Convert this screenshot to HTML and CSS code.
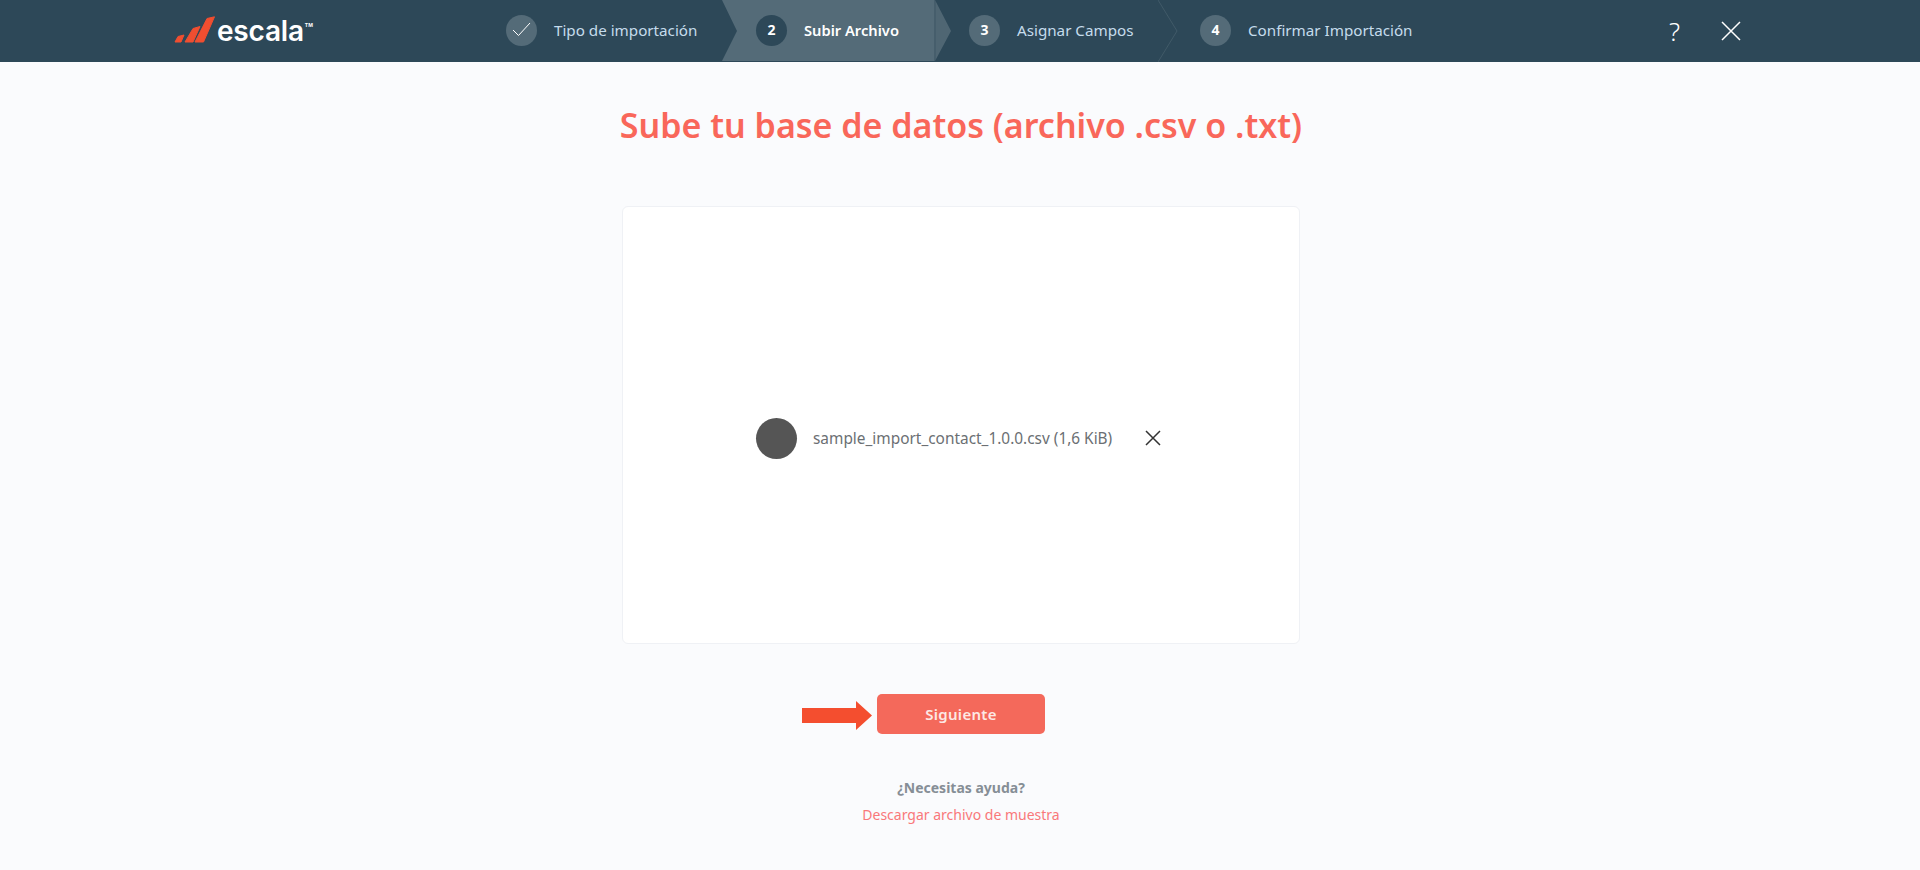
FILE: index.html
```html
<!DOCTYPE html>
<html lang="es">
<head>
<meta charset="utf-8">
<title>Importar contactos</title>
<link rel="stylesheet" href="styles.css">
</head>
<body>

<header class="topbar">
  <a class="logo" href="#">
    <svg class="logo-bars" width="41" height="27" viewBox="0 0 41 27">
      <path d="M1 26 L4 20.5 L10 19 L7 26 Z" fill="#f04e30" stroke="#f04e30" stroke-linejoin="round"/>
      <path d="M11 26 L19 12.5 L26 10.5 L19 26 Z" fill="#f04e30" stroke="#f04e30" stroke-linejoin="round"/>
      <path d="M21 26 L33 2.5 L40.5 0.8 L29.5 26 Z" fill="#f04e30" stroke="#f04e30" stroke-linejoin="round"/>
    </svg>
    <span class="logo-name">escala</span><span class="logo-tm">TM</span>
  </a>

  <ol class="steps">
    <li class="step step-done">
      <span class="step-num">
        <svg width="19" height="15" viewBox="0 0 19 15"><path d="M1 8 L6.5 13.5 L18 1" fill="none" stroke="#fff" stroke-width="1"/></svg>
      </span>
      Tipo de importación
    </li>
    <li class="step step-active">
      <span class="step-num">2</span>
      Subir Archivo
    </li>
    <li class="step step-next">
      <span class="step-num">3</span>
      Asignar Campos
      <svg class="step-chevron" width="20" height="62" viewBox="0 0 20 62"><path d="M0 0 L19 31 L0 62" fill="none" stroke="#415a68" stroke-width="1"/></svg>
    </li>
    <li class="step step-last">
      <span class="step-num">4</span>
      Confirmar Importación
    </li>
  </ol>

  <div class="topbar-actions">
    <a class="help" href="#">?</a>
    <a class="close" href="#">
      <svg width="20" height="20" viewBox="0 0 20 20"><path d="M1 1 L19 19 M19 1 L1 19" stroke="#fff" stroke-width="1.5"/></svg>
    </a>
  </div>
</header>

<main class="content">
  <h1 class="title">Sube tu base de datos (archivo .csv o .txt)</h1>

  <section class="dropzone">
    <div class="file">
      <span class="file-icon"></span>
      <span class="file-name">sample_import_contact_1.0.0.csv (1,6 KiB)</span>
      <a class="file-remove" href="#">
        <svg width="16" height="16" viewBox="0 0 16 16"><path d="M1 1 L15 15 M15 1 L1 15" stroke="#333" stroke-width="1.5"/></svg>
      </a>
    </div>
  </section>

  <div class="next-wrap">
    <svg class="next-arrow" width="70" height="29" viewBox="0 0 70 29"><path d="M0 7 H54 V0 L70 14.5 L54 29 V22 H0 Z" fill="#f44e2f"/></svg>
    <button class="next" type="button">Siguiente</button>
  </div>

  <p class="help-title">¿Necesitas ayuda?</p>
  <a class="sample" href="#">Descargar archivo de muestra</a>
</main>

</body>
</html>
```

FILE: styles.css
```css
* {
    box-sizing: border-box;
}

html, body {
    margin: 0;
    height: 100%;
}

body {
    background-color: #fafbfd;
    font-family: "Noto Sans", "Open Sans", sans-serif;
    color: #555;
}

a {
    text-decoration: none;
}

/* top bar */
.topbar {
    display: flex;
    align-items: center;
    height: 62px;
    padding-left: 174px;
    background-color: #2d4858;
    overflow: hidden;
}

.logo {
    display: flex;
    align-items: flex-start;
    width: 332px;
    color: #fff;
}

.logo-bars {
    margin-top: 1px;
    flex: none;
}

.logo-name {
    margin-left: 2px;
    font-family: Inter, sans-serif;
    font-size: 28px;
    font-weight: 600;
    line-height: 32px;
    letter-spacing: -0.2px;
}

.logo-tm {
    margin-left: 1px;
    font-family: Inter, sans-serif;
    font-size: 5px;
    font-weight: 700;
    line-height: 20px;
}

.steps {
    display: flex;
    flex: none;
    width: 1163px;
    margin: 0;
    padding: 0;
    list-style: none;
}

.step {
    position: relative;
    display: flex;
    align-items: center;
    gap: 17px;
    height: 62px;
    padding-bottom: 3px;
    font-size: 15.2px;
    color: #c5dcec;
    white-space: nowrap;
}

.step-num {
    display: flex;
    align-items: center;
    justify-content: center;
    flex: none;
    width: 31px;
    height: 31px;
    margin-top: 2px;
    padding-bottom: 2px;
    border-radius: 50%;
    background-color: #546b78;
    color: #fff;
    font-size: 14px;
    font-weight: 700;
}

.step-done {
    width: 216px;
}

.step-active {
    width: 229px;
    padding-left: 34px;
    background: linear-gradient(to right, #546b78 212px, #465e6c 212px, #465e6c 214px, #4f6673 214px);
    clip-path: polygon(0 0, 213px 0, 100% 50%, 213px 61px, 0 61px, 15px 50%);
    color: #fff;
    font-size: 14.7px;
    font-weight: 600;
}

.step-active .step-num {
    background-color: #2d4858;
}

.step-next {
    width: 243px;
    margin-left: -16px;
    padding-left: 34px;
}

.step-chevron {
    position: absolute;
    top: 0;
    right: 0;
}

.step-last {
    margin-left: -19px;
    padding-left: 41px;
}

.topbar-actions {
    display: flex;
    align-items: center;
    gap: 41px;
}

.help {
    font-size: 26px;
    line-height: 30px;
    font-weight: 300;
    color: #fff;
}

.close {
    display: flex;
}

/* main column */
.content {
    display: flex;
    flex-direction: column;
    align-items: center;
    padding: 38px 0 0 2px;
}

.title {
    margin: 0;
    font-size: 34px;
    line-height: 50px;
    font-weight: 600;
    color: #f9675a;
}

.dropzone {
    display: flex;
    align-items: center;
    justify-content: center;
    width: 678px;
    height: 438px;
    margin-top: 56px;
    padding-top: 26px;
    background-color: #fff;
    border: 1px solid #eff1f5;
    border-radius: 6px;
}

.file {
    display: flex;
    align-items: center;
    width: 410px;
}

.file-icon {
    flex: none;
    width: 41px;
    height: 41px;
    border-radius: 50%;
    background-color: #555;
}

.file-name {
    margin-left: 16px;
    font-size: 15.4px;
    color: #6b6f73;
    white-space: nowrap;
}

.file-remove {
    display: flex;
    margin-left: 33px;
}

.next-wrap {
    position: relative;
    margin-top: 50px;
}

.next-arrow {
    position: absolute;
    top: 7px;
    left: -75px;
}

.next {
    display: block;
    width: 168px;
    height: 40px;
    border: 0;
    border-radius: 5px;
    background-color: #f4695b;
    color: #fde8e4;
    font-family: inherit;
    font-size: 15px;
    font-weight: 600;
    letter-spacing: 0.3px;
}

.help-title {
    margin: 44px 0 0;
    font-size: 14px;
    line-height: 20px;
    font-weight: 700;
    color: #868e96;
}

.sample {
    margin-top: 7px;
    font-size: 14px;
    line-height: 20px;
    color: #f9787a;
}
```
